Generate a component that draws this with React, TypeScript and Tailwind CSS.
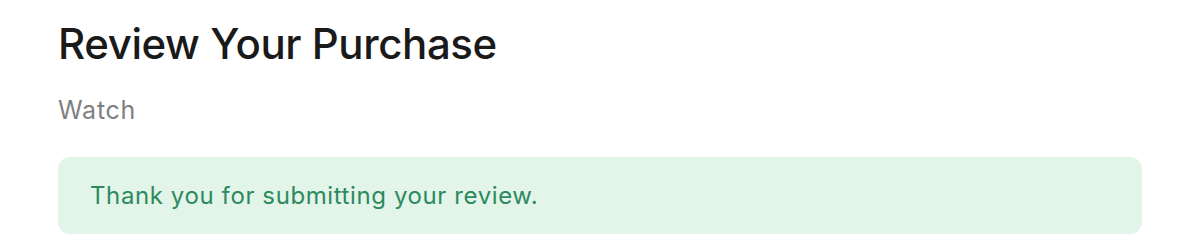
export default function App() {
    return (
        <div className="min-h-[252px] w-[1200px] bg-white px-[58px] pt-[16px] font-['Inter',sans-serif]">
            <h1 className="text-[42px] leading-[56px] font-medium text-[#1a1a1a] tracking-[-0.01em]">
                Review Your Purchase
            </h1>
            <p className="mt-[22px] text-[25px] leading-[32px] tracking-[0.03em] text-[#7f7f7f]">Watch</p>
            <div className="mt-[31px] h-[77px] flex items-center rounded-[12px] bg-[#e3f4e8] px-[32px]">
                <p className="text-[24px] leading-[32px] tracking-[0.025em] text-[#2b8a5e]">
                    Thank you for submitting your review.
                </p>
            </div>
        </div>
    );
}
